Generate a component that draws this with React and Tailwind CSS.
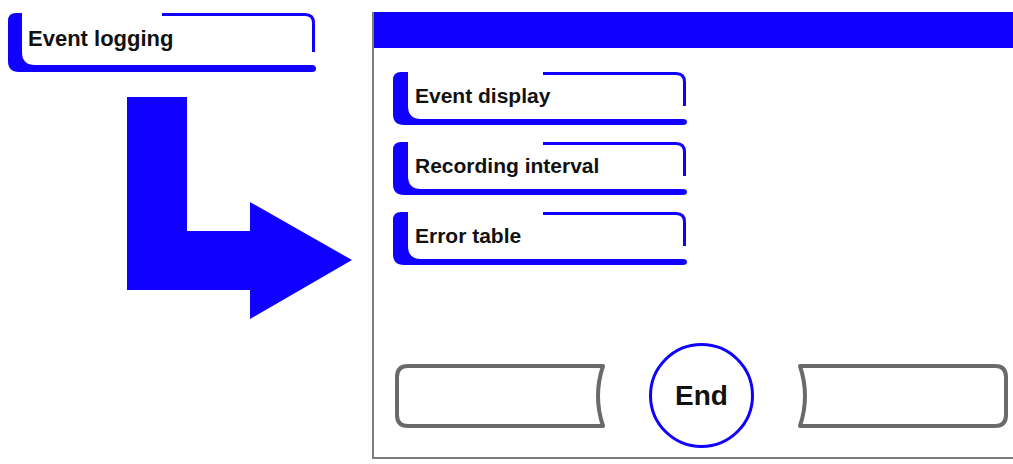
const BLUE = "#1000ff";

// blue framed menu button: thick left bar + bottom bar, thin top/right line
const FrameButton = ({ w, h, bar = 15, bottom = 6, lineFrom = 150, label, pl = 22, big }) => {
  const fill = `M 8 0 H ${bar} V ${h - bottom - 13} Q ${bar} ${h - bottom} ${bar + 13} ${h - bottom} H ${w - 4} Q ${w} ${h - bottom} ${w} ${h - bottom / 2} Q ${w} ${h} ${w - 4} ${h} H 11 Q 0 ${h} 0 ${h - 11} V 8 Q 0 0 8 0 Z`;
  const line = `M ${lineFrom} 1.5 H ${w - 11} Q ${w - 2.5} 1.5 ${w - 2.5} 10 V ${h - bottom - 13}`;
  return (
    <div className="relative shrink-0" style={{ width: w, height: h }}>
      <svg className="absolute inset-0" width={w} height={h} viewBox={`0 0 ${w} ${h}`}>
        <path d={fill} fill={BLUE} />
        <path d={line} fill="none" stroke={BLUE} strokeWidth="3" />
      </svg>
      <div
        className={`relative flex items-center font-bold text-[#111] leading-none ${big ? "text-[22px]" : "text-[21px]"}`}
        style={{ paddingLeft: pl, height: h - bottom }}
      >
        {label}
      </div>
    </div>
  );
};

const GrayButton = ({ flip }) => (
  <svg width="211" height="64" viewBox="0 0 211 64" className={flip ? "-scale-x-100" : ""}>
    <path
      d="M 13 2 H 208 Q 198 32 208 62 H 13 Q 2 62 2 51 V 13 Q 2 2 13 2 Z"
      fill="white"
      stroke="#6a6a6a"
      strokeWidth="4"
      strokeLinejoin="round"
    />
  </svg>
);

export default function App() {
  return (
    <div className="flex w-[1013px] h-[464px] bg-white overflow-hidden font-['Liberation_Sans',Arial,sans-serif]">
      <div className="w-[372px] shrink-0 flex flex-col pl-[8px] pt-[13px]">
        <FrameButton w={308} h={59} bar={14} bottom={7} lineFrom={154} pl={20} big label="Event logging" />
        <svg width="225" height="222" viewBox="0 0 225 222" className="ml-[119px] mt-[25px]">
          <polygon points="0,0 60,0 60,134 123,134 123,105 225,163 123,222 123,193 0,193" fill={BLUE} />
        </svg>
      </div>

      <div className="flex-1 mt-[12px] self-start flex flex-col border-l-2 border-b-2 border-[#7d7d7d] pb-[9px]">
        <div className="h-[36px] bg-[#1000ff]" />
        <div className="flex flex-col gap-[17px] pl-[19px] pt-[24px]">
          <FrameButton w={294} h={53} label="Event display" />
          <FrameButton w={294} h={53} label="Recording interval" />
          <FrameButton w={294} h={53} label="Error table" />
        </div>
        <div className="flex items-center gap-[43px] pl-[21px] mt-[78px]">
          <GrayButton />
          <div className="w-[105px] h-[105px] rounded-full border-[3px] border-[#1000ff] flex items-center justify-center text-[28px] font-bold text-[#111]">
            End
          </div>
          <GrayButton flip />
        </div>
      </div>
    </div>
  );
}
